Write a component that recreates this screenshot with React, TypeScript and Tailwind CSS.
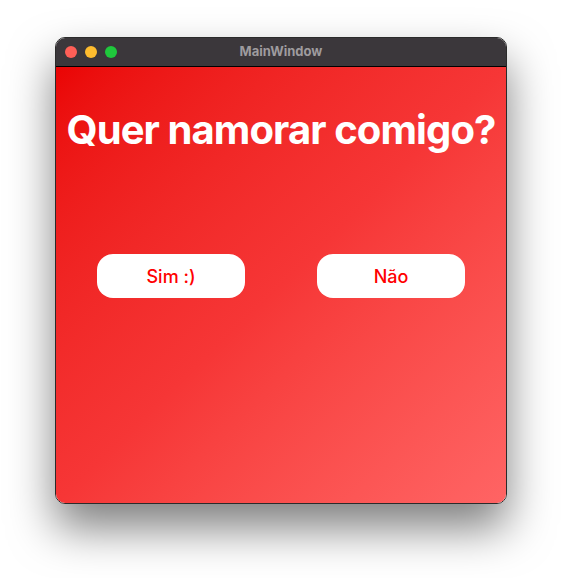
import React from "react";

function TrafficLights() {
  return (
    <div className="absolute left-[9px] top-1/2 flex -translate-y-1/2 gap-[8px]">
      <span className="h-[12px] w-[12px] rounded-full bg-[#fe5f57]" />
      <span className="h-[12px] w-[12px] rounded-full bg-[#febc2e]" />
      <span className="h-[12px] w-[12px] rounded-full bg-[#1fc83c]" />
    </div>
  );
}

function ChoiceButton({ label }: { label: string }) {
  return (
    <button
      className="flex h-[44px] w-[148px] items-center justify-center rounded-[16px] bg-white text-[18px] font-medium text-[#ff0000]"
      type="button"
    >
      {label}
    </button>
  );
}

export default function App() {
  return (
    <div
      className="min-h-[578px] w-full bg-white pl-[55px] pt-[37px]"
      style={{ fontFamily: "Inter, 'Liberation Sans', sans-serif" }}
    >
      <div className="flex h-[467px] w-[452px] flex-col overflow-hidden rounded-[10px] border border-[#2b2b2b] shadow-[0_24px_45px_rgba(0,0,0,0.5)]">
        {/* title bar */}
        <div className="relative flex h-[29px] shrink-0 items-center justify-center border-b border-black bg-[#3b373b]">
          <TrafficLights />
          <span className="text-[13px] font-bold text-[#9e9b9e]">MainWindow</span>
        </div>

        {/* content */}
        <div className="flex flex-1 flex-col bg-linear-to-br from-[#ea0404] via-[#f63636] to-[#ff6464]">
          <h1 className="mt-[39px] text-center text-[40px] font-bold leading-[48px] tracking-[-0.9px] text-white">
            Quer namorar comigo?
          </h1>
          <div className="mt-[100px] flex justify-between px-[41px]">
            <ChoiceButton label="Sim :)" />
            <ChoiceButton label="Não" />
          </div>
        </div>
      </div>
    </div>
  );
}
